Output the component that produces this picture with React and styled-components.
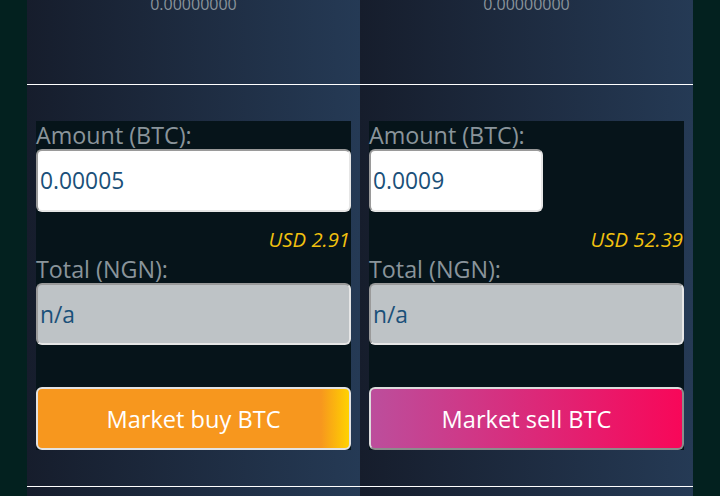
import React from "react";
import styled, { createGlobalStyle } from "styled-components";

const Global = createGlobalStyle`
  html, body { margin: 0; padding: 0; background: #03211f; overflow: hidden; }
  body { font-family: "Open Sans", "Noto Sans", sans-serif; }
`;

const Page = styled.div`
  width: 720px;
  height: 496px;
  display: flex;
  justify-content: center;
  background: #03211f;
  overflow: hidden;
`;

const Column = styled.section`
  width: 333px;
  display: flex;
  flex-direction: column;
  background: linear-gradient(90deg, #161d2c 0%, #253a55 100%);
`;

const Balance = styled.div`
  height: 88px;
  margin-top: -4px;
  border-bottom: 1px solid #ffffff;
  text-align: center;
  color: #8a949b;
  font-size: 16px;
  line-height: 16px;
  flex: none;
`;

const FormArea = styled.div`
  padding: 36px 9px;
  border-bottom: 1px solid #ffffff;
  flex: none;
`;

const Form = styled.div`
  background: #06141a;
  display: flex;
  flex-direction: column;
  height: 329px;
`;

const Label = styled.div`
  color: #8a949b;
  font-size: 23.3px;
  line-height: 28px;
  height: 28px;
  white-space: nowrap;
`;

const Field = styled.div`
  box-sizing: border-box;
  width: ${(p) => p.$w}px;
  height: 63px;
  border: 2px solid;
  border-color: #9a9a9a #e6e6e6 #e6e6e6 #9a9a9a;
  border-radius: 6px;
  background: ${(p) => (p.$disabled ? "#bec3c6" : "#ffffff")};
  color: #1a5079;
  font-size: 22.8px;
  display: flex;
  align-items: center;
  padding-left: 2px;
`;

const Usd = styled.div`
  color: #f2c10f;
  font-style: italic;
  font-size: 20.3px;
  text-align: right;
  padding-right: 1px;
  height: 43px;
  line-height: 24px;
  padding-top: 15px;
  box-sizing: border-box;
  white-space: nowrap;
`;

const Spacer = styled.div`
  height: 42px;
`;

const Button = styled.button`
  box-sizing: border-box;
  width: 315px;
  height: 63px;
  border: 2px solid;
  border-color: ${(p) =>
    p.$sell ? "#dcdcdc #8c8c8c #8c8c8c #dcdcdc" : "#e2e2e2"};
  border-radius: 6px;
  background: ${(p) =>
    p.$sell
      ? "linear-gradient(90deg, #bc4e9c 0%, #f80759 100%)"
      : "linear-gradient(90deg, #f7971e 0%, #f7971e 91%, #ffd200 100%)"};
  color: #ffffff;
  font-family: "Open Sans", "Noto Sans", sans-serif;
  font-size: 23.6px;
  padding: 0;
`;

const Bottom = styled.div`
  flex: 1;
`;

function Panel({ amount, amountWidth, usd, action, sell }) {
  return (
    <Column>
      <Balance>0.00000000</Balance>
      <FormArea>
        <Form>
          <Label>Amount (BTC):</Label>
          <Field $w={amountWidth}>{amount}</Field>
          <Usd>{usd}</Usd>
          <Label>Total (NGN):</Label>
          <Field $w={315} $disabled>
            n/a
          </Field>
          <Spacer />
          <Button $sell={sell}>{action}</Button>
        </Form>
      </FormArea>
      <Bottom />
    </Column>
  );
}

export default function App() {
  return (
    <>
      <Global />
      <Page>
        <Panel amount="0.00005" amountWidth={315} usd="USD 2.91" action="Market buy BTC" />
        <Panel amount="0.0009" amountWidth={174} usd="USD 52.39" action="Market sell BTC" sell />
      </Page>
    </>
  );
}
